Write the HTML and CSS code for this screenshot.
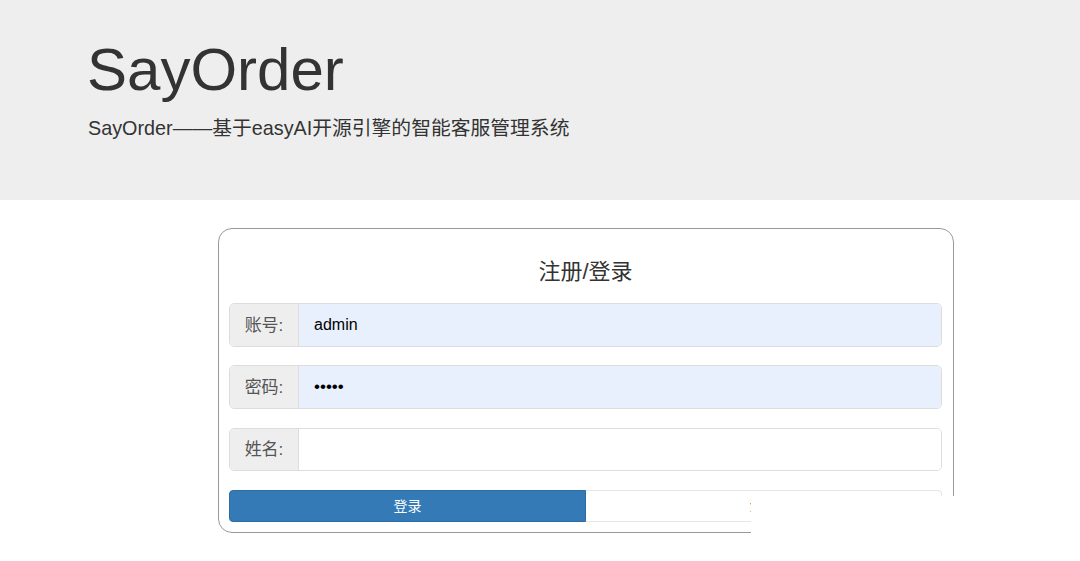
FILE: index.html
```html
<!DOCTYPE html>
<html lang="zh">
<head>
<meta charset="utf-8">
<title>SayOrder</title>
<link rel="stylesheet" href="styles.css">
</head>
<body>
<header class="jumbotron">
  <h1 class="brand">SayOrder</h1>
  <p class="tagline">SayOrder——基于easyAI开源引擎的智能客服管理系统</p>
</header>
<main class="main">
  <section class="card">
    <h2 class="card-title">注册/登录</h2>
    <div class="group g1">
      <span class="addon">账号:</span>
      <span class="field filled">admin</span>
    </div>
    <div class="group g2">
      <span class="addon">密码:</span>
      <span class="field filled dots">•••••</span>
    </div>
    <div class="group g3">
      <span class="addon">姓名:</span>
      <span class="field"></span>
    </div>
    <div class="actions">
      <button class="btn btn-primary">登录</button>
      <button class="btn btn-default">注册</button>
    </div>
  </section>
</main>
<div class="mask"></div>
</body>
</html>
```
FILE: styles.css
```css
html, body {
  margin: 0;
  padding: 0;
  background: #fff;
  font-family: "Liberation Sans", Arial, "Noto Sans CJK SC", sans-serif;
  color: #333;
}
.jumbotron {
  background: #eeeeee;
  height: 200px;
  box-sizing: border-box;
  padding: 34px 0 0 87px;
}
.brand {
  margin: 0;
  font-size: 60px;
  font-weight: 400;
  line-height: 72px;
  color: #333;
}
.tagline {
  margin: 9px 0 0 1px;
  font-size: 19.8px;
  line-height: 26px;
  color: #333;
}
.main {
  padding: 28px 0 0 218px;
  display: flex;
}
.card {
  width: 736px;
  box-sizing: border-box;
  border: 1px solid #999;
  border-radius: 14px;
  padding: 0 11px 10px 10px;
}
.card-title {
  margin: 0;
  padding: 26px 0 14px;
  text-align: center;
  font-size: 22px;
  font-weight: 400;
  line-height: 34px;
  color: #333;
}
.group {
  display: flex;
  height: 44px;
  box-sizing: border-box;
  border: 1px solid #ddd;
  border-radius: 5px;
  overflow: hidden;
  margin-bottom: 19px;
}
.g1 { margin-bottom: 18px; }
.g3 { height: 43px; }
.addon {
  width: 69px;
  flex: none;
  background: #eee;
  border-right: 1px solid #ddd;
  display: flex;
  align-items: center;
  justify-content: center;
  padding-bottom: 4px;
  box-sizing: border-box;
  font-size: 17px;
  color: #555;
}
.field {
  flex: 1;
  display: flex;
  align-items: center;
  padding-left: 15px;
  font-size: 16px;
  color: #000;
  background: #fff;
}
.field.filled { background: #e8f0fe; }
.field.dots { font-size: 17px; }
.actions {
  display: flex;
  height: 32px;
}
.btn {
  flex: 1;
  margin: 0;
  padding: 0 0 3px;
  font-family: inherit;
  font-size: 14px;
  box-sizing: border-box;
  cursor: pointer;
}
.btn-primary {
  background: #337ab7;
  color: #fff;
  border: 1px solid #2e6da4;
  border-radius: 4px 0 0 4px;
}
.btn-default {
  background: #fff;
  color: #333;
  border: 1px solid #e6e6e6;
  border-left: none;
  border-radius: 0 4px 4px 0;
}
.mask {
  position: absolute;
  left: 751px;
  top: 496px;
  right: 0;
  bottom: 0;
  background: #fff;
}
```
